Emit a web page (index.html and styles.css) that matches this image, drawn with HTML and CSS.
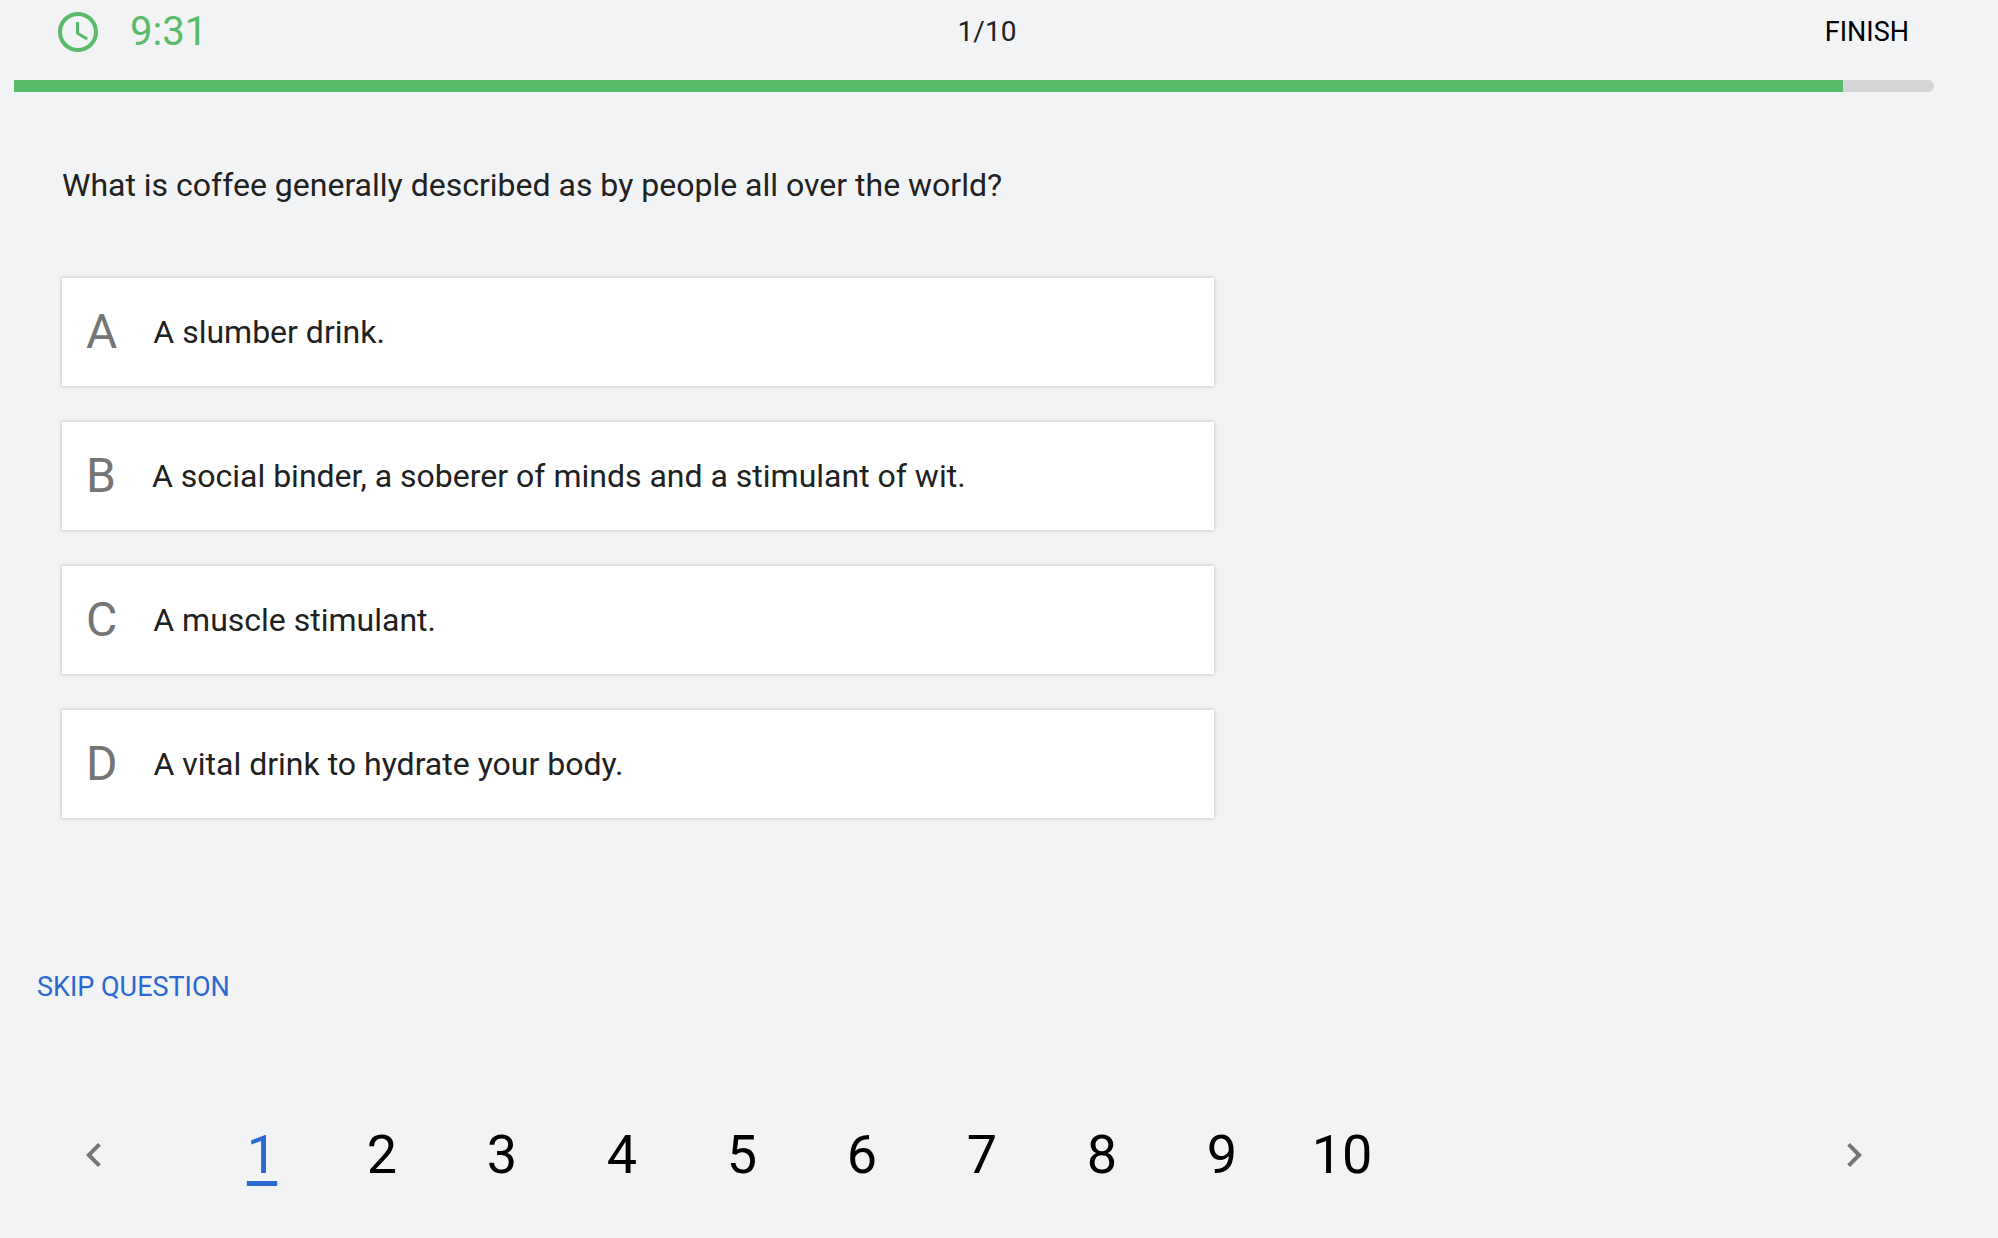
FILE: index.html
```html
<!DOCTYPE html>
<html lang="en">
<head>
    <meta charset="UTF-8">
    <meta name="viewport" content="width=device-width, initial-scale=1.0">
    <title>Coffee Quiz</title>
    <link rel="stylesheet" href="styles.css">
</head>
<body>
    <div class="quiz">
        <header class="quiz-header">
            <div class="timer">
                <svg class="timer-icon" viewBox="0 0 24 24" aria-hidden="true">
                    <path d="M11.99 2C6.47 2 2 6.48 2 12s4.47 10 9.99 10C17.52 22 22 17.52 22 12S17.52 2 11.99 2zM12 20c-4.42 0-8-3.58-8-8s3.58-8 8-8 8 3.58 8 8-3.58 8-8 8z"/>
                    <path d="M12.5 7H11v6l5.25 3.15.75-1.23-4.5-2.67z"/>
                </svg>
                <span class="timer-value">9:31</span>
            </div>
            <span class="counter">1/10</span>
            <button type="button" class="text-button finish">FINISH</button>
        </header>
        <div class="progress">
            <div class="progress-fill" style="width: 95.26%"></div>
        </div>

        <main class="content">
            <h1 class="question">What is coffee generally described as by people all over the world?</h1>
            <div class="options">
                <button type="button" class="option">
                    <span class="letter">A</span>
                    <span>A slumber drink.</span>
                </button>
                <button type="button" class="option">
                    <span class="letter">B</span>
                    <span>A social binder, a soberer of minds and a stimulant of wit.</span>
                </button>
                <button type="button" class="option">
                    <span class="letter">C</span>
                    <span>A muscle stimulant.</span>
                </button>
                <button type="button" class="option">
                    <span class="letter">D</span>
                    <span>A vital drink to hydrate your body.</span>
                </button>
            </div>
        </main>

        <button type="button" class="text-button skip">SKIP QUESTION</button>

        <nav class="pagination" aria-label="Questions">
            <button type="button" class="arrow" aria-label="Previous question">
                <svg viewBox="0 0 24 24" aria-hidden="true"><path d="M15.41 7.41L14 6l-6 6 6 6 1.41-1.41L10.83 12z"/></svg>
            </button>
            <div class="pages">
                <a href="#1" class="page active" aria-current="page">1</a>
                <a href="#2" class="page">2</a>
                <a href="#3" class="page">3</a>
                <a href="#4" class="page">4</a>
                <a href="#5" class="page">5</a>
                <a href="#6" class="page">6</a>
                <a href="#7" class="page">7</a>
                <a href="#8" class="page">8</a>
                <a href="#9" class="page">9</a>
                <a href="#10" class="page">10</a>
            </div>
            <button type="button" class="arrow" aria-label="Next question">
                <svg viewBox="0 0 24 24" aria-hidden="true"><path d="M10 6L8.59 7.41 13.17 12l-4.58 4.59L10 18l6-6z"/></svg>
            </button>
        </nav>
    </div>
</body>
</html>
```

FILE: styles.css
```css
* {
    box-sizing: border-box;
}
body {
    margin: 0;
    background-color: #f1f3f5;
    color: #212121;
    font-family: Roboto, Arial, sans-serif;
    font-size: 32px;
    line-height: 44px;
}
button {
    padding: 0;
    border: none;
    background: none;
    font: inherit;
    color: inherit;
    cursor: pointer;
}
.quiz {
    margin: 0 64px 0 14px;
}
.quiz-header {
    display: grid;
    grid-template-columns: 1fr auto 1fr;
    align-items: center;
    height: 80px;
    padding: 0 14px 16px 40px;
}
.timer {
    display: flex;
    align-items: center;
    gap: 28px;
    color: #57bb6a;
}
.timer-icon {
    width: 48px;
    height: 48px;
    fill: currentColor;
}
.timer-value {
    font-size: 40px;
}
.counter {
    font-size: 28px;
}
.text-button {
    padding: 0 11px;
    font-size: 27px;
}
.finish {
    justify-self: end;
    color: #000;
}
.progress {
    height: 12px;
    overflow: hidden;
    border-radius: 0 6px 6px 0;
    background-color: #d4d5d7;
}
.progress-fill {
    height: 100%;
    background-color: #57bb6a;
}
.content {
    padding: 71px 0 0 48px;
}
.question {
    margin: 0 0 71px;
    font-size: 32px;
    font-weight: 400;
}
.options {
    display: flex;
    flex-direction: column;
    gap: 36px;
    width: 1152px;
    max-width: 100%;
}
.option {
    display: flex;
    align-items: center;
    gap: 36px;
    min-height: 108px;
    padding: 0 24px;
    background-color: #fff;
    box-shadow: 0 0 4px rgba(0, 0, 0, 0.25);
    text-align: left;
}
.letter {
    font-size: 48px;
    color: #757575;
}
.skip {
    margin: 147px 0 0 12px;
    color: #2b68cf;
}
.pagination {
    display: flex;
    align-items: center;
    gap: 84px;
    margin-top: 114px;
    padding: 0 56px;
}
.arrow {
    display: flex;
}
.arrow svg {
    width: 48px;
    height: 48px;
    fill: #757575;
}
.pages {
    display: flex;
    flex: 1;
}
.page {
    width: 120px;
    color: #000;
    font-size: 54px;
    line-height: 64px;
    text-align: center;
    text-decoration: none;
}
.page.active {
    color: #2b68cf;
    text-decoration: underline;
    text-decoration-thickness: 5px;
    text-underline-offset: 8px;
}
```
